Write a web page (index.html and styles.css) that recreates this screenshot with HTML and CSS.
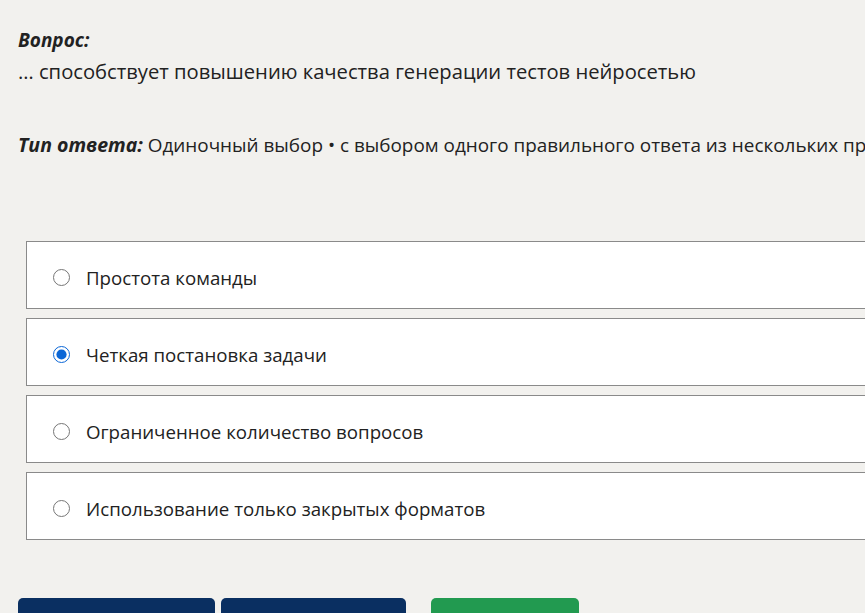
FILE: index.html
```html
<!DOCTYPE html>
<html lang="ru">
<head>
    <meta charset="UTF-8">
    <meta name="viewport" content="width=device-width, initial-scale=1.0">
    <title>Вопрос</title>
    <link rel="stylesheet" href="styles.css">
</head>
<body>
    <div class="page">
        <div class="question">
            <div class="label">Вопрос:</div>
            <div class="question-text">… способствует повышению качества генерации тестов нейросетью</div>
        </div>
        <div class="answer-type">
            <span class="label">Тип ответа:</span> Одиночный выбор • с выбором одного правильного ответа из нескольких предложенных вариантов
        </div>
        <form class="options">
            <label class="option">
                <input type="radio" name="answer" value="1">
                <span>Простота команды</span>
            </label>
            <label class="option">
                <input type="radio" name="answer" value="2" checked>
                <span>Четкая постановка задачи</span>
            </label>
            <label class="option">
                <input type="radio" name="answer" value="3">
                <span>Ограниченное количество вопросов</span>
            </label>
            <label class="option">
                <input type="radio" name="answer" value="4">
                <span>Использование только закрытых форматов</span>
            </label>
        </form>
        <div class="actions">
            <button type="button" class="btn btn-dark btn-wide">Предыдущий</button>
            <button type="button" class="btn btn-dark btn-mid">Следующий</button>
            <button type="button" class="btn btn-green">Ответить</button>
        </div>
    </div>
</body>
</html>
```

FILE: styles.css
```css
html {
    overflow: hidden;
}
body {
    margin: 0;
    background: #f2f1ee;
    font-family: "Open Sans", "Noto Sans", sans-serif;
    color: #222;
}
.page {
    width: 1100px;
    padding: 26px 18px 0;
}
.label {
    font-weight: bold;
    font-style: italic;
}
.question {
    font-size: 19px;
    line-height: 28px;
}
.question-text {
    font-size: 20.2px;
    margin-top: 3px;
}
.answer-type {
    font-size: 18.9px;
    margin-top: 46px;
    white-space: nowrap;
}
.answer-type .label {
    font-size: 19.5px;
}
.options {
    display: flex;
    flex-direction: column;
    gap: 9px;
    margin: 83px 0 0 8px;
}
.option {
    display: flex;
    align-items: center;
    gap: 16px;
    height: 62px;
    padding: 4px 26px 0;
    background: #fff;
    border: 1px solid #8a8a8a;
    font-size: 18.7px;
    cursor: pointer;
}
.option input {
    width: 17px;
    height: 17px;
    margin: 0;
    accent-color: #0a66d6;
}
.actions {
    display: flex;
    gap: 6px;
    margin-top: 58px;
}
.btn {
    height: 48px;
    padding-top: 14px;
    border: none;
    border-radius: 5px;
    color: #fff;
    font-size: 16px;
    font-family: inherit;
}
.btn-dark {
    background: #0a2f61;
}
.btn-wide {
    width: 197px;
}
.btn-mid {
    width: 185px;
}
.btn-green {
    width: 148px;
    margin-left: 19px;
    background: #229a50;
}
```
